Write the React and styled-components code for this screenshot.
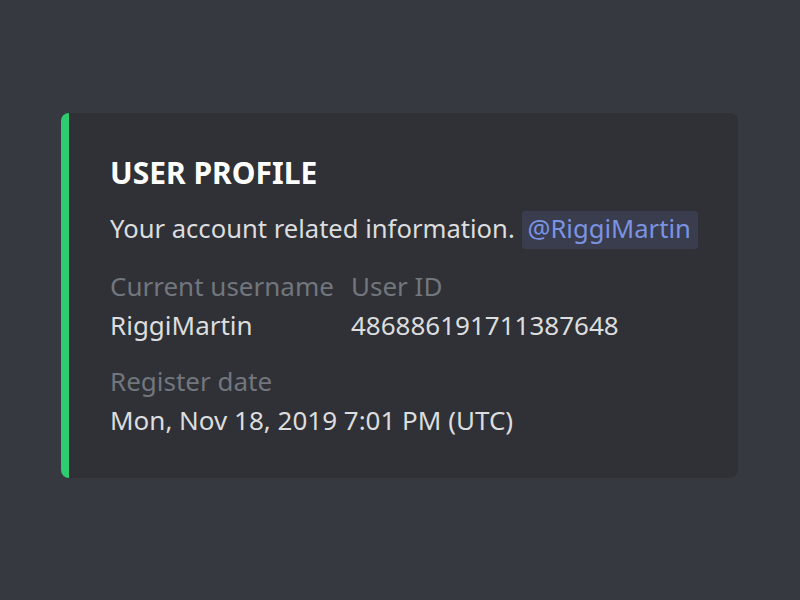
import React from "react"
import styled, { createGlobalStyle } from "styled-components"

const GlobalStyle = createGlobalStyle`
  html, body {
    margin: 0;
    padding: 0;
    background-color: #36393f;
    font-family: "Noto Sans", "Open Sans", sans-serif;
  }
`

const Page = styled.div`
  width: 800px;
  height: 600px;
  padding: 113px 0 0 61px;
  box-sizing: border-box;
`

const Embed = styled.div`
  width: 677px;
  height: 365px;
  box-sizing: border-box;
  background-color: #2f3136;
  border-left: 8px solid #2ecc71;
  border-radius: 8px;
  padding: 40px 16px 0 41px;
  display: flex;
  flex-direction: column;
`

const Title = styled.h1`
  margin: 0;
  color: #ffffff;
  font-size: 30px;
  font-weight: 700;
  line-height: 40px;
`

const Description = styled.p`
  margin: 17px 0 0;
  color: #dcddde;
  font-size: 25.6px;
  line-height: 38px;
  white-space: nowrap;
`

const Mention = styled.span`
  background-color: rgba(114, 137, 218, 0.15);
  color: #7b93e2;
  padding: 0 7px 3px 5px;
  margin-left: 1px;
  border-radius: 3px;
`

const FieldRow = styled.div`
  display: flex;
  margin-top: ${(p) => p.$top || 0}px;
`

const Field = styled.div`
  display: flex;
  flex-direction: column;
  width: ${(p) => (p.$width ? `${p.$width}px` : "auto")};
`

const FieldName = styled.div`
  color: #72767d;
  font-size: 26px;
  line-height: 39px;
`

const FieldValue = styled.div`
  color: #dcddde;
  font-size: 26px;
  line-height: 39px;
`

const fields = [
  { name: "Current username", value: "RiggiMartin", width: 241 },
  { name: "User ID", value: "486886191711387648" },
]

const App = () => {
  return (
    <>
      <GlobalStyle />
      <Page>
        <Embed>
          <Title>USER PROFILE</Title>
          <Description>
            Your account related information. <Mention>@RiggiMartin</Mention>
          </Description>
          <FieldRow $top={19}>
            {fields.map((f) => (
              <Field key={f.name} $width={f.width}>
                <FieldName>{f.name}</FieldName>
                <FieldValue>{f.value}</FieldValue>
              </Field>
            ))}
          </FieldRow>
          <FieldRow $top={17}>
            <Field>
              <FieldName>Register date</FieldName>
              <FieldValue>Mon, Nov 18, 2019 7:01 PM (UTC)</FieldValue>
            </Field>
          </FieldRow>
        </Embed>
      </Page>
    </>
  )
}

export default App
